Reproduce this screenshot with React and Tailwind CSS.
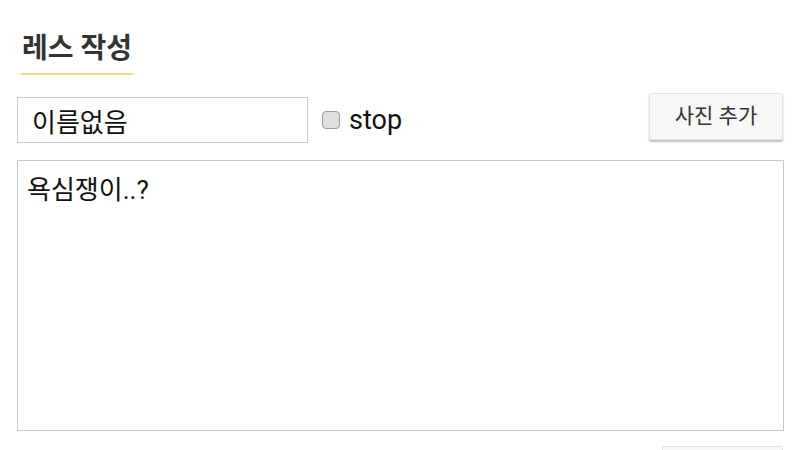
import React from 'react';

// Reply composer: title, name field with a stop toggle, photo button and body textarea.

const FONT = "font-['Roboto','Noto_Sans_CJK_KR',sans-serif]";

export default function App() {
  return (
    <div className={`w-[800px] h-[450px] overflow-hidden bg-white ${FONT}`}>
      <div className="pl-[17px] pr-[16px]">
        {/* Section title with accent underline */}
        <div className="pt-[29px]">
          <h2 className="inline-block ml-[4px] pl-[1px] pr-[1px] text-[28px] leading-[40px] font-bold text-[#333] border-b-2 border-[#f2d88a] pb-[4px]">
            레스 작성
          </h2>
        </div>

        {/* Name / stop / photo row */}
        <div className="mt-[22px] flex items-center">
          <input
            type="text"
            defaultValue="이름없음"
            className="w-[291px] h-[46px] border border-[#c9c9c9] px-[14px] text-[26px] text-[#111] outline-none"
          />
          <label className="ml-[14px] flex items-center gap-[9px] text-[27px] text-[#111]">
            <span className="w-[18px] h-[18px] rounded-[4px] border border-[#9a9a9a] bg-[#dedede]" />
            stop
          </label>
          <button className="ml-auto mr-[1px] h-[47px] w-[134px] -mt-[8px] rounded-[2px] border border-[#e2e2e2] bg-[#f8f8f8] pt-[2px] text-[21px] text-[#333] shadow-[0_2px_2px_rgba(0,0,0,0.25)]">
            사진 추가
          </button>
        </div>

        {/* Body */}
        <textarea
          defaultValue="욕심쟁이..?"
          className="mt-[17px] block w-[767px] h-[271px] border border-[#c9c9c9] px-[9px] py-[12px] text-[26px] leading-[34px] text-[#111] resize-none outline-none"
        />

        <div className="flex justify-end">
          <button className="mt-[15px] mr-[1px] w-[121px] h-[40px] rounded-[2px] border border-[#e2e2e2] bg-[#f8f8f8]" />
        </div>
      </div>
    </div>
  );
}
